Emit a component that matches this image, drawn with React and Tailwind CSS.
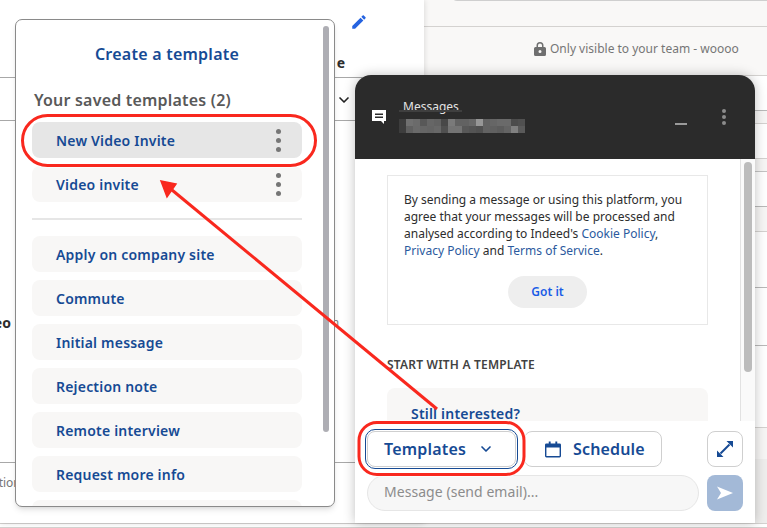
import { ChevronDown } from "lucide-react";

const templates = [
  "Apply on company site",
  "Commute",
  "Initial message",
  "Rejection note",
  "Remote interview",
  "Request more info",
];

// heights of the strips behind the chat window, top to bottom
const rightRows = [
  { h: "h-[27px]", cls: "bg-[#f9f8f7] border-[#d4d2d0]" },
  { h: "h-[49px]", cls: "bg-[#f9f8f7] border-[#d4d2d0]" },
  { h: "h-[35px]", cls: "bg-white border-[#b9b9b9]" },
  { h: "h-[13px]", cls: "bg-[#f7f6f5] border-[#d4d2d0]" },
  { h: "h-[35px]", cls: "bg-white border-[#d4d2d0]" },
  { h: "h-[13px]", cls: "bg-[#f7f6f5] border-[#c4c4c4]" },
  { h: "h-[35px]", cls: "bg-white border-[#b9b9b9]" },
  { h: "h-[25px]", cls: "bg-[#f7f6f5] border-[#d4d2d0]" },
  { h: "h-[56px]", cls: "bg-white border-[#b9b9b9]" },
  { h: "h-[58px]", cls: "bg-white border-[#b9b9b9]" },
  { h: "h-[82px]", cls: "bg-white border-[#d4d2d0]" },
  { h: "h-[31px]", cls: "bg-[#f7f6f5] border-transparent" },
];

const blurRows = [
  ["#3d3d3d", "#707070", "#6b6b6b", "#585858", "#666666", "#626262", "#484848", "#7a7a7a", "#626262", "#626262", "#686868", "#969696", "#626262", "#666666", "#6a6a6a", "#6a6a6a", "#4c4c4c", "#505050"],
  ["#3d3d3d", "#606060", "#6a6a6a", "#666666", "#646464", "#686868", "#505050", "#747474", "#747474", "#585858", "#545454", "#505050", "#626262", "#606060", "#5c5c5c", "#646464", "#808080", "#5a5a5a"],
];

function Dots({ className }) {
  return (
    <div className={`flex flex-col gap-[4px] ${className}`}>
      <span className="block h-[5px] w-[5px] rounded-full bg-current" />
      <span className="block h-[5px] w-[5px] rounded-full bg-current" />
      <span className="block h-[5px] w-[5px] rounded-full bg-current" />
    </div>
  );
}

function TemplateRow({ label, active, menu }) {
  return (
    <div
      className={`flex h-[36px] items-center justify-between rounded-[8px] pl-[24px] pr-[21px] ${
        active ? "bg-[#e6e6e6]" : "bg-[#f8f7f6]"
      }`}
    >
      <span className="text-[14px] font-semibold tracking-[0.2px] text-[#164a94]">{label}</span>
      {menu && <Dots className="text-[#767676]" />}
    </div>
  );
}

function TemplatesPopover() {
  return (
    <div className="absolute left-[15px] top-[19px] z-20 h-[488px] w-[320px] overflow-hidden rounded-[7px] border border-[#8a8a8a] bg-white shadow-md">
      <div className="absolute right-[5px] top-[6px] h-[406px] w-[6px] rounded-full bg-[#aeaeb4]" />
      <div className="flex flex-col pl-[16px] pr-[32px]">
        <div className="mt-[23px] text-center text-[16px] font-semibold leading-[22px] tracking-[0.24px] text-[#164a94]">
          Create a template
        </div>
        <div className="mt-[24px] pl-[2px] text-[16px] font-semibold leading-[22px] tracking-[0.2px] text-[#595959]">
          Your saved templates (2)
        </div>
        <div className="mt-[11px] flex flex-col gap-[8px]">
          <TemplateRow label="New Video Invite" active menu />
          <TemplateRow label="Video invite" menu />
        </div>
        <div className="my-[16px] h-[2px] bg-[#e6e6e6]" />
        <div className="flex flex-col gap-[8px]">
          {templates.map((t) => (
            <TemplateRow key={t} label={t} />
          ))}
          <TemplateRow label="" />
        </div>
      </div>
    </div>
  );
}

function ChatWindow() {
  return (
    <div className="absolute left-[355px] top-[75px] z-20 flex h-[448px] w-[400px] flex-col rounded-t-[16px] bg-white shadow-[0_0_12px_rgba(0,0,0,0.25)]">
      <div className="flex h-[84px] shrink-0 items-start rounded-t-[16px] bg-[#2b2b2b] text-white">
        <svg className="ml-[17px] mt-[35px] h-[14px] w-[14px]" viewBox="0 0 14 14">
          <path d="M0 0h14v11h-2v3l-3-3H0z" fill="#fff" />
          <path d="M3 3.500h8v1.400H3zM3 6.500h8v1.400H3z" fill="#2b2b2b" />
        </svg>
        <div className="ml-[13px] mt-[24px] w-[126px]">
          <div className="pl-[4px] text-[12px] leading-[16px] text-[#e4e4e4]">Messages</div>
          <div className="relative -mt-[5px] h-[2px] w-[63px] bg-[#3f3f3f]" />
          <div className="mt-[7px] flex flex-col">
            {blurRows.map((row, i) => (
              <div key={i} className="flex">
                {row.map((c, j) => (
                  <span key={j} className="block h-[7px] w-[7px]" style={{ backgroundColor: c }} />
                ))}
              </div>
            ))}
          </div>
        </div>
        <div className="ml-[150px] mt-[48px] h-[1.5px] w-[12px] bg-[#9a9a9a]" />
        <Dots className="ml-[35px] mt-[34px] !gap-[2px] text-[#8c8c8c] [&>span]:!h-[4px] [&>span]:!w-[4px]" />
      </div>

      <div className="flex h-[262px] shrink-0 overflow-hidden">
        <div className="flex-1 pl-[32px] pt-[16px]">
          <div className="flex h-[150px] w-[321px] flex-col border border-[#e8e8e8] px-[16px] pt-[15px]">
            <p className="text-[12px] leading-[17px] text-[#2d2d2d]">
              By sending a message or using this platform, you agree that your messages will be processed and analysed according to Indeed's{" "}
              <span className="text-[#2b5a9e]">Cookie Policy</span>,{" "}
              <span className="text-[#2b5a9e]">Privacy Policy</span> and{" "}
              <span className="text-[#2b5a9e]">Terms of Service</span>.
            </p>
            <div className="mx-auto mt-[17px] flex h-[32px] w-[79px] items-center justify-center rounded-full bg-[#eeeeee] text-[12px] font-semibold text-[#1a5ce6]">
              Got it
            </div>
          </div>
          <div className="mt-[31px] text-[12px] font-semibold leading-[18px] tracking-[0.2px] text-[#424242]">
            START WITH A TEMPLATE
          </div>
          <div className="mt-[14px] h-[60px] w-[321px] rounded-[8px] bg-[#f8f7f6] pl-[24px] pt-[16px] text-[14px] font-semibold leading-[20px] tracking-[0.2px] text-[#164a94]">
            Still interested?
          </div>
        </div>
        <div className="w-[15px] shrink-0 border-l border-[#e2e2e2] bg-[#fafafa] pl-[3px] pt-[3px]">
          <div className="h-[210px] w-[8px] rounded-full bg-[#bcbcbc]" />
        </div>
      </div>

      <div className="flex flex-1 flex-col bg-white px-[12px] pt-[10px]">
        <div className="flex gap-[8px]">
          <button
            type="button"
            className="flex h-[36px] w-[149px] items-center gap-[12px] rounded-[8px] border border-[#cfcfcf] pl-[16px] text-[16px] font-semibold tracking-[0.2px] text-[#164a94] outline outline-[1.5px] outline-offset-[1px] outline-[#164a94]"
          >
            Templates
            <ChevronDown size={16} strokeWidth={2.5} />
          </button>
          <button
            type="button"
            className="flex h-[36px] w-[138px] items-center gap-[12px] rounded-[8px] border border-[#cfcfcf] pl-[20px] text-[16px] font-semibold tracking-[0.15px] text-[#164a94]"
          >
            <svg className="h-[17px] w-[16px]" viewBox="0 0 17 17" fill="#164a94">
              <path d="M4 0h2v2h5V0h2v2h2.500A1.500 1.500 0 0 1 17 3.500v12a1.500 1.500 0 0 1-1.500 1.500h-14A1.500 1.500 0 0 1 0 15.500v-12A1.500 1.500 0 0 1 1.500 2H4zM1.500 6.500v9h14v-9z" />
            </svg>
            Schedule
          </button>
          <button
            type="button"
            className="ml-auto flex h-[36px] w-[36px] items-center justify-center rounded-[8px] border border-[#cfcfcf]"
          >
            <svg className="h-[16px] w-[16px]" viewBox="0 0 16 16" fill="#164a94">
              <path d="M9.500 0H16v6.500zM0 9.500V16h6.500z" />
              <path d="M3.500 12.500 12.500 3.500" stroke="#164a94" strokeWidth="2" />
            </svg>
          </button>
        </div>
        <div className="mt-[8px] flex gap-[8px]">
          <div className="flex h-[36px] w-[332px] items-center rounded-full border border-[#e6e6e6] bg-[#f7f7f7] pb-[3px] pl-[16px] text-[14px] tracking-[0.05px] text-[#8c8c8c]">
            Message (send email)...
          </div>
          <div className="flex h-[36px] w-[36px] items-center justify-center rounded-[8px] bg-[#a3b9d7]">
            <svg className="h-[16px] w-[16px]" viewBox="0 0 16 16" fill="#fff">
              <path d="M0 1.500 16 8 0 14.500 4 8z" />
            </svg>
          </div>
        </div>
      </div>
    </div>
  );
}

function Annotations() {
  return (
    <svg className="pointer-events-none absolute left-0 top-0 z-30 h-[528px] w-[767px]" viewBox="0 0 767 528" fill="none">
      <rect x="22.500" y="115.500" width="293" height="50" rx="25" stroke="#fff" strokeOpacity="0.7" strokeWidth="5" />
      <rect x="22.500" y="115.500" width="293" height="50" rx="25" stroke="#f9281e" strokeWidth="3" />
      <rect x="359" y="422.500" width="165" height="52" rx="18" stroke="#fff" strokeOpacity="0.7" strokeWidth="5" />
      <rect x="359" y="422.500" width="165" height="52" rx="18" stroke="#f9281e" strokeWidth="3" />
      <path d="M437 409 172 190" stroke="#f9281e" strokeWidth="3" />
      <path d="M161 181 176 184 167 197z" fill="#f9281e" stroke="#f9281e" strokeWidth="1.500" />
    </svg>
  );
}

export default function App() {
  return (
    <div className="relative flex h-[528px] w-[767px] flex-col overflow-hidden bg-white font-['Noto_Sans',sans-serif]">
      <div className="flex h-[523px] shrink-0">
        <div className="relative z-10 flex w-[424px] shrink-0 flex-col bg-white shadow-[0_0_6px_rgba(0,0,0,0.15)]">
          <div className="flex h-[78px] shrink-0 flex-col items-end border-b border-[#a8a8a8] pr-[57px]">
            <svg className="mr-[-1px] mt-[13px] h-[18px] w-[18px]" viewBox="0 0 24 24" fill="#2563e0">
              <path d="M3 17.250V21h3.750L17.810 9.940l-3.750-3.750L3 17.250zM20.710 7.040c.39-.39.39-1.020 0-1.410l-2.340-2.340c-.39-.39-1.020-.39-1.410 0l-1.830 1.830 3.750 3.750 1.830-1.830z" />
            </svg>
            <span className="mr-[22px] mt-[22px] text-[14px] font-bold leading-[20px] text-[#2d2d2d]">e</span>
          </div>
          <div className="flex h-[43px] shrink-0 items-center border-b border-[#a8a8a8] pl-[336px] pt-[1px]">
            <ChevronDown size={16} strokeWidth={2.5} className="text-[#222]" />
          </div>
          <div className="flex h-[342px] shrink-0 items-center justify-between border-b border-[#a8a8a8] pr-[85px] pt-[62px]">
            <span className="-ml-[15px] text-[14px] font-bold text-[#2d2d2d]">deo</span>
            <span className="text-[11px] text-[#767676]">n</span>
          </div>
          <div className="-ml-[16px] pt-[11px] text-[12px] text-[#767676]">option</div>
        </div>
        <div className="flex min-w-0 flex-1 flex-col">
          {rightRows.map((r, i) => (
            <div key={i} className={`relative shrink-0 border-b ${r.h} ${r.cls}`}>
              {i === 0 && (
                <div className="absolute -top-[20px] left-[27px] h-[21px] w-[340px] rounded-[6px] border border-[#cfcfcf] bg-[#fafafa]" />
              )}
              {i === 1 && (
                <div className="flex h-full items-center gap-[4px] pb-[4px] pl-[110px] text-[12px] text-[#767676]">
                  <svg className="h-[14px] w-[12px]" viewBox="0 0 12 14" fill="#6f6f6f">
                    <path d="M6 0a3.500 3.500 0 0 1 3.500 3.500V5h1A1.500 1.500 0 0 1 12 6.500v6a1.500 1.500 0 0 1-1.500 1.500h-9A1.500 1.500 0 0 1 0 12.500v-6A1.500 1.500 0 0 1 1.500 5h1V3.500A3.500 3.500 0 0 1 6 0zm0 1.500a2 2 0 0 0-2 2V5h4V3.500a2 2 0 0 0-2-2zM6 8a1.500 1.500 0 1 0 0 3 1.500 1.500 0 0 0 0-3z" />
                  </svg>
                  Only visible to your team - woooo
                </div>
              )}
            </div>
          ))}
          <div className="flex-1 bg-[#efeeed]" />
        </div>
      </div>
      <div className="h-[5px] shrink-0 border-y border-[#d4d2d0] bg-white" />

      <ChatWindow />
      <TemplatesPopover />
      <Annotations />
    </div>
  );
}
